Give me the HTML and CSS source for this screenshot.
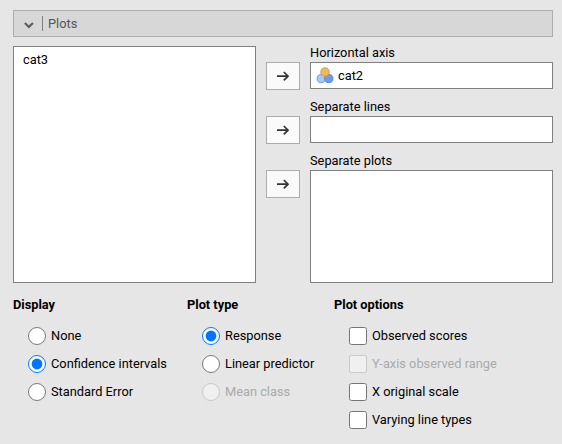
FILE: index.html
```html
<!DOCTYPE html>
<html lang="en">
<head>
<meta charset="utf-8">
<title>Plots</title>
<link rel="stylesheet" href="styles.css">
</head>
<body>
<section class="panel">
  <header class="panel-header">
    <svg class="chevron" width="10" height="7" viewBox="0 0 10 7"><path d="M0.9 1 L4.9 5 L8.9 1"/></svg>
    <span class="panel-title">Plots</span>
  </header>
  <div class="supplier">
    <div class="list source"><div class="variable">cat3</div></div>
    <div class="targets">
      <div class="target">
        <div class="target-label">Horizontal axis</div>
        <button class="move"><svg width="12" height="10" viewBox="0 0 12 10"><path d="M0 5.2H11M6.8 1L11 5.2L6.8 9.4"/></svg></button>
        <div class="list single">
          <div class="variable assigned">
            <svg class="nominal" width="18" height="17" viewBox="0 0 18 17">
              <circle cx="5.2" cy="11.6" r="4.1" fill="#a8c8f5" stroke="#6b9de8"/>
              <circle cx="12.8" cy="11.6" r="4.1" fill="#6b9de8" stroke="#4f87dd"/>
              <circle cx="9" cy="5" r="4.2" fill="#f0b95b" stroke="#d39a3e"/>
            </svg>
            <span>cat2</span>
          </div>
        </div>
      </div>
      <div class="target">
        <div class="target-label">Separate lines</div>
        <button class="move"><svg width="12" height="10" viewBox="0 0 12 10"><path d="M0 5.2H11M6.8 1L11 5.2L6.8 9.4"/></svg></button>
        <div class="list single"></div>
      </div>
      <div class="target">
        <div class="target-label">Separate plots</div>
        <button class="move"><svg width="12" height="10" viewBox="0 0 12 10"><path d="M0 5.2H11M6.8 1L11 5.2L6.8 9.4"/></svg></button>
        <div class="list multi"></div>
      </div>
    </div>
  </div>
  <div class="options">
    <div class="group">
      <div class="group-title">Display</div>
      <label class="option"><input type="radio" name="display"><span>None</span></label>
      <label class="option"><input type="radio" name="display" checked><span>Confidence intervals</span></label>
      <label class="option"><input type="radio" name="display"><span>Standard Error</span></label>
    </div>
    <div class="group">
      <div class="group-title">Plot type</div>
      <label class="option"><input type="radio" name="type" checked><span>Response</span></label>
      <label class="option"><input type="radio" name="type"><span>Linear predictor</span></label>
      <label class="option disabled"><input type="radio" name="type" disabled><span>Mean class</span></label>
    </div>
    <div class="group">
      <div class="group-title">Plot options</div>
      <label class="option"><input type="checkbox"><span>Observed scores</span></label>
      <label class="option disabled"><input type="checkbox" disabled><span>Y-axis observed range</span></label>
      <label class="option"><input type="checkbox"><span>X original scale</span></label>
      <label class="option"><input type="checkbox"><span>Varying line types</span></label>
    </div>
  </div>
</section>
</body>
</html>
```
FILE: styles.css
```css
* { box-sizing: border-box; }

body {
  margin: 0;
  background: #e6e6e6;
  color: #000;
  font: 12.8px/16px Roboto, "Liberation Sans", sans-serif;
}

.panel { padding: 10px 9px 0 13px; }

.panel-header {
  display: flex;
  align-items: center;
  height: 27px;
  padding-left: 10px;
  border: 1px solid #acacac;
  background: #d7d7d7;
}

.chevron { margin-top: 4px; fill: none; stroke: #5c5c5c; stroke-width: 2.2; }

.panel-title {
  margin-left: 8px;
  padding-left: 5px;
  border-left: 1px solid #808080;
  line-height: 15px;
  color: #555;
}

.supplier {
  display: grid;
  grid-template-columns: 243px 287px;
  gap: 10px;
  height: 237px;
  margin-top: 9px;
}

.list { border: 1px solid #808080; background: #fff; }
.source { padding: 5px 9px; }

.targets { display: flex; flex-direction: column; }

.target {
  display: grid;
  grid-template-columns: 34px 243px;
  grid-template-rows: 16px auto;
  column-gap: 10px;
  height: 54px;
}
.target:last-child { height: auto; flex: 1; grid-template-rows: 16px 1fr; }

.target-label { grid-column: 2; line-height: 14px; }

.move {
  display: flex;
  align-items: center;
  justify-content: center;
  width: 34px;
  height: 28px;
  padding: 0;
  border: 1px solid #acacac;
  background: #fafafa;
}
.move svg { fill: none; stroke: #333; stroke-width: 1.7; }

.single { height: 27px; }

.assigned { display: flex; align-items: center; gap: 4px; height: 25px; padding-left: 5px; }

.options {
  display: grid;
  grid-template-columns: 174px 147px 1fr;
  margin-top: 14px;
}

.group-title { margin-bottom: 9px; font-weight: 700; }

.option { display: flex; align-items: center; height: 28px; padding-left: 15px; }
.option input { width: 18px; height: 18px; margin: 0 5px 0 0; }
.disabled { color: #aaa; }
```
